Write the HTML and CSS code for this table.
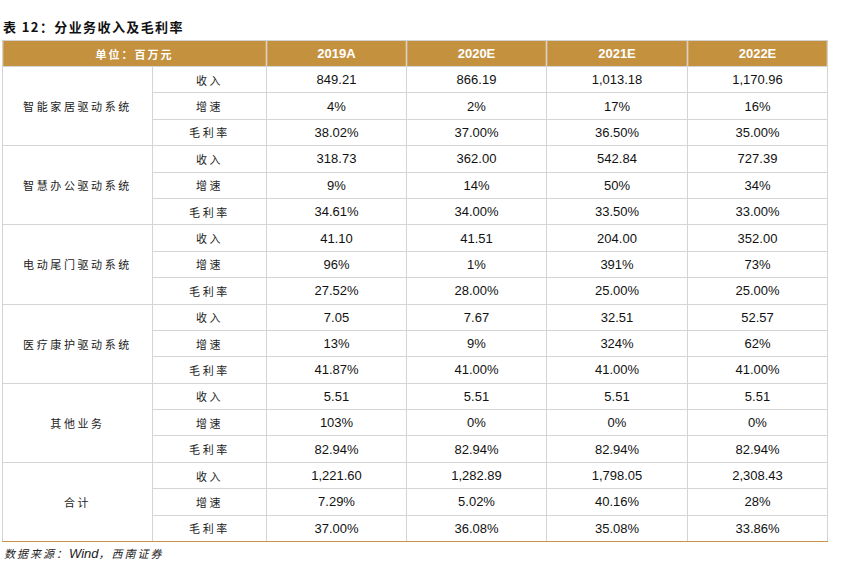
FILE: index.html
```html
<!DOCTYPE html>
<html lang="zh">
<head>
<meta charset="utf-8">
<link rel="stylesheet" href="styles.css">
</head>
<body>
<div class="page">
  <div class="title">表 12：分业务收入及毛利率</div>
  <table class="tbl">
    <colgroup>
      <col class="c1"><col class="c2"><col class="c3"><col class="c4"><col class="c5"><col class="c6">
    </colgroup>
    <thead>
      <tr>
        <th colspan="2" class="unit">单位：百万元</th>
        <th>2019A</th><th>2020E</th><th>2021E</th><th>2022E</th>
      </tr>
    </thead>
    <tbody>
      <tr><td rowspan="3" class="seg">智能家居驱动系统</td><td class="lbl">收入</td><td>849.21</td><td>866.19</td><td>1,013.18</td><td>1,170.96</td></tr>
      <tr><td class="lbl">增速</td><td>4%</td><td>2%</td><td>17%</td><td>16%</td></tr>
      <tr><td class="lbl">毛利率</td><td>38.02%</td><td>37.00%</td><td>36.50%</td><td>35.00%</td></tr>

      <tr><td rowspan="3" class="seg">智慧办公驱动系统</td><td class="lbl">收入</td><td>318.73</td><td>362.00</td><td>542.84</td><td>727.39</td></tr>
      <tr><td class="lbl">增速</td><td>9%</td><td>14%</td><td>50%</td><td>34%</td></tr>
      <tr><td class="lbl">毛利率</td><td>34.61%</td><td>34.00%</td><td>33.50%</td><td>33.00%</td></tr>

      <tr><td rowspan="3" class="seg">电动尾门驱动系统</td><td class="lbl">收入</td><td>41.10</td><td>41.51</td><td>204.00</td><td>352.00</td></tr>
      <tr><td class="lbl">增速</td><td>96%</td><td>1%</td><td>391%</td><td>73%</td></tr>
      <tr><td class="lbl">毛利率</td><td>27.52%</td><td>28.00%</td><td>25.00%</td><td>25.00%</td></tr>

      <tr><td rowspan="3" class="seg">医疗康护驱动系统</td><td class="lbl">收入</td><td>7.05</td><td>7.67</td><td>32.51</td><td>52.57</td></tr>
      <tr><td class="lbl">增速</td><td>13%</td><td>9%</td><td>324%</td><td>62%</td></tr>
      <tr><td class="lbl">毛利率</td><td>41.87%</td><td>41.00%</td><td>41.00%</td><td>41.00%</td></tr>

      <tr><td rowspan="3" class="seg">其他业务</td><td class="lbl">收入</td><td>5.51</td><td>5.51</td><td>5.51</td><td>5.51</td></tr>
      <tr><td class="lbl">增速</td><td>103%</td><td>0%</td><td>0%</td><td>0%</td></tr>
      <tr><td class="lbl">毛利率</td><td>82.94%</td><td>82.94%</td><td>82.94%</td><td>82.94%</td></tr>

      <tr class="last"><td rowspan="3" class="seg">合计</td><td class="lbl">收入</td><td>1,221.60</td><td>1,282.89</td><td>1,798.05</td><td>2,308.43</td></tr>
      <tr class="last"><td class="lbl">增速</td><td>7.29%</td><td>5.02%</td><td>40.16%</td><td>28%</td></tr>
      <tr class="last final"><td class="lbl">毛利率</td><td>37.00%</td><td>36.08%</td><td>35.08%</td><td>33.86%</td></tr>
    </tbody>
  </table>
  <div class="source">数据来源：<span class="lat">Wind</span>，西南证券</div>
</div>
</body>
</html>
```

FILE: styles.css
```css
html, body {
  margin: 0;
  padding: 0;
  background: #ffffff;
}

.page {
  padding: 18px 0 0 2px;
  width: 826px;
}

.title {
  font-family: "Noto Sans CJK SC", "Liberation Sans", sans-serif;
  font-weight: 700;
  font-size: 13px;
  letter-spacing: 1.4px;
  line-height: 17px;
  color: #111;
  padding-left: 1px;
  margin-bottom: 5px;
}

.tbl {
  border-collapse: collapse;
  table-layout: fixed;
  width: 825px;
  font-family: "Liberation Sans", Arial, "Noto Sans CJK SC", sans-serif;
  font-size: 13px;
  color: #111;
}

.c1 { width: 150px; }
.c2 { width: 114px; }
.c3 { width: 140px; }
.c4 { width: 140px; }
.c5 { width: 141px; }
.c6 { width: 140px; }

.tbl th {
  background: #c4913f;
  color: #ffffff;
  font-weight: 700;
  font-size: 13px;
  height: 25px;
  padding: 0;
  text-align: center;
  border: 1.5px solid #d2d2d2;
  border-bottom: none;
  box-shadow: inset 12px 0 0 -11px #d1a660, inset -12px 0 0 -11px #d1a660;
}

.tbl th.unit {
  font-family: "Noto Sans CJK SC", sans-serif;
  font-size: 11px;
  letter-spacing: 2px;
  box-shadow: inset 12px 0 0 -11px #d1a660, inset -13px 0 0 -12px #d1a660;
}

.tbl td {
  height: 26.4px;
  padding: 0;
  text-align: center;
  border: 1.5px solid #d4d4d4;
  box-sizing: border-box;
}

.tbl td.seg,
.tbl td.lbl {
  font-family: "Noto Sans CJK SC", sans-serif;
  font-size: 11px;
  letter-spacing: 2.6px;
  color: #222;
}

.tbl tr.final td {
  border-bottom: 1.5px solid #c8944a;
}

.tbl tr.last td.seg {
  border-bottom: 1.5px solid #c8944a;
}

.source {
  font-family: "Noto Sans CJK SC", "Liberation Sans", sans-serif;
  font-size: 11px;
  font-style: italic;
  letter-spacing: 2px;
  color: #222;
  margin-top: 3px;
  padding-left: 2px;
}

.source .lat {
  font-family: "Liberation Sans", Arial, sans-serif;
  font-size: 13px;
  letter-spacing: 0;
}
```
